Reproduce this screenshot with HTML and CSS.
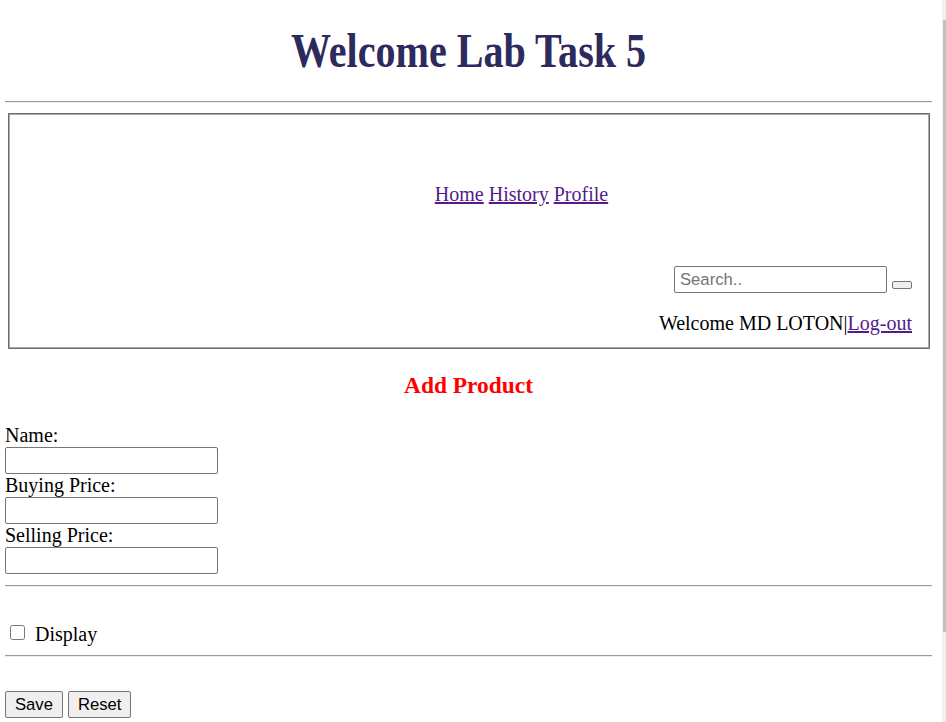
FILE: index.html
```html
<!DOCTYPE html>
<html lang="en">
<head>
<meta charset="utf-8">
<title>Welcome Lab Task 5</title>
<link rel="stylesheet" href="styles.css">
</head>
<body>
<header class="site-header">
  <h1 class="title">Welcome Lab Task 5</h1>
</header>
<hr class="rule rule-top">
<nav class="navbox">
  <div class="nav-links"><a class="link" href="#">Home</a> <a class="link" href="#">History</a> <a class="link" href="#">Profile</a></div>
  <div class="search-row">
    <input class="search-input" type="text" placeholder="Search..">
    <button class="search-btn" type="button"></button>
  </div>
  <div class="user-row">Welcome MD LOTON|<a class="link" href="#">Log-out</a></div>
</nav>
<h3 class="form-title">Add Product</h3>
<form class="product-form">
  <label class="field-label">Name:</label>
  <input class="field-input" type="text">
  <label class="field-label">Buying Price:</label>
  <input class="field-input" type="text">
  <label class="field-label">Selling Price:</label>
  <input class="field-input" type="text">
  <hr class="rule rule-form">
  <div class="check-row">
    <input class="check" type="checkbox">
    <span class="check-text">Display</span>
  </div>
  <hr class="rule rule-check">
  <div class="actions">
    <button class="btn" type="button">Save</button>
    <button class="btn" type="button">Reset</button>
  </div>
</form>
</body>
</html>
```
FILE: styles.css
```css
html {
  min-height: 100%;
  background:
    linear-gradient(#c2c2c2, #c2c2c2) no-repeat right 0 top 20px / 3px 612px,
    linear-gradient(#f0f0f0, #f0f0f0) no-repeat right 0 top 0 / 4px 100%,
    #ffffff;
}
body {
  margin: 0;
  padding: 0 14px 0 5px;
  font-family: "Liberation Serif", "Times New Roman", serif;
  font-size: 20px;
  line-height: 23px;
  color: #000;
}
.title {
  margin: 24px 0;
  font-size: 48px;
  line-height: 53px;
  font-weight: bold;
  text-align: center;
  color: #2d2a5e;
  transform: scaleX(0.835);
}
.rule {
  height: 0;
  margin: 0;
  border: 0;
  border-top: 1px solid #9a9a9a;
  border-bottom: 1px solid #eeeeee;
}
.rule-top {
  margin-bottom: 10px;
}
.navbox {
  margin: 0 2px 0 3px;
  border: 1px solid #6e6e6e;
  box-shadow: inset 0 0 0 1px #a8a8a8;
  padding: 69px 17px 13px 1px;
}
.nav-links {
  padding-left: 121px;
  text-align: center;
}
.link {
  color: #551a8b;
  text-decoration: underline;
}
.search-row {
  display: flex;
  justify-content: flex-end;
  align-items: flex-start;
  gap: 5px;
  margin-top: 60px;
}
.search-input {
  box-sizing: border-box;
  width: 213px;
  height: 27px;
  margin: 0;
  padding: 0 5px;
  border: 1px solid #767676;
  border-radius: 2px;
  font-family: "Liberation Sans", Arial, sans-serif;
  font-size: 16.67px;
  color: #000;
}
.search-input::placeholder {
  color: #757575;
}
.search-btn {
  box-sizing: border-box;
  width: 20px;
  height: 8px;
  margin: 15px 0 0 0;
  padding: 0;
  border: 1px solid #767676;
  border-radius: 2px;
  background: #efefef;
}
.user-row {
  margin-top: 19px;
  text-align: right;
}
.form-title {
  margin: 23px 0 25px;
  font-size: 23.4px;
  line-height: 27px;
  font-weight: bold;
  text-align: center;
  color: #ff0000;
}
.product-form {
  margin: 0;
}
.field-label {
  display: block;
  line-height: 23px;
}
.field-input {
  display: block;
  box-sizing: border-box;
  width: 213px;
  height: 27px;
  margin: 0;
  padding: 0 5px;
  border: 1px solid #767676;
  border-radius: 2px;
  font-family: "Liberation Sans", Arial, sans-serif;
  font-size: 16.67px;
}
.rule-form {
  margin-top: 11px;
}
.check-row {
  display: flex;
  align-items: flex-start;
  margin-top: 36px;
  line-height: 23px;
}
.check {
  width: 15px;
  height: 15px;
  margin: 2px 0 0 5px;
}
.check-text {
  margin-left: 10px;
}
.rule-check {
  margin-top: 9px;
}
.actions {
  display: flex;
  gap: 5px;
  margin-top: 34px;
}
.btn {
  box-sizing: border-box;
  height: 27px;
  margin: 0;
  padding: 0 9px;
  border: 1px solid #767676;
  border-radius: 2px;
  background: #efefef;
  font-family: "Liberation Sans", Arial, sans-serif;
  font-size: 16.67px;
  color: #000;
}
```
